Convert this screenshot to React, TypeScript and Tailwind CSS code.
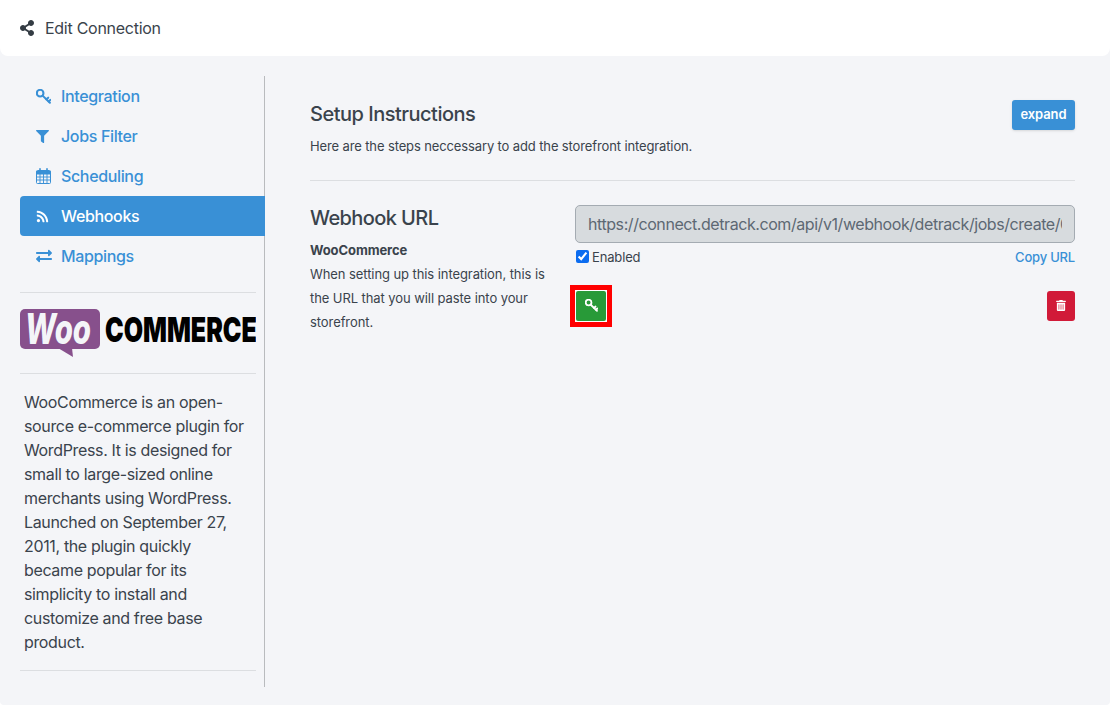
import { FaExchangeAlt, FaFilter, FaRss, FaShareAlt, FaTrashAlt } from 'react-icons/fa';

function KeyIcon({ className }: { className?: string }) {
  return (
    <svg viewBox="1 1 14.5 14.5" fill="none" stroke="currentColor" strokeWidth="2" strokeLinecap="round" className={className}>
      <circle cx="5" cy="5" r="3.2" />
      <path d="M7.4 7.4 14.4 14.2" />
      <path d="M11 11 12.8 9.4" />
      <path d="M13.2 13 14.8 11.6" />
    </svg>
  );
}

function CalendarIcon({ className }: { className?: string }) {
  return (
    <svg viewBox="0 0 15 16" className={className} fill="none" stroke="currentColor">
      <rect x="0.5" y="2.5" width="14" height="13" rx="1" />
      <path d="M0.5 3.5h14v2.5h-14z" fill="currentColor" />
      <path d="M0.5 9h14M0.5 12h14M4 6v9M7.5 6v9M11 6v9" strokeWidth="0.9" />
      <path d="M4 0.8v3M11 0.8v3" strokeWidth="1.6" strokeLinecap="round" />
    </svg>
  );
}

const navItems = [
  { label: 'Integration', icon: KeyIcon, size: 'h-[15px] w-[15px]' },
  { label: 'Jobs Filter', icon: FaFilter, size: 'h-[13px] w-[13px]' },
  { label: 'Scheduling', icon: CalendarIcon, size: 'h-[16px] w-[15px]' },
  { label: 'Webhooks', icon: FaRss, size: 'h-[13px] w-[13px]', active: true },
  { label: 'Mappings', icon: FaExchangeAlt, size: 'h-[16px] w-[16px]' },
];

function WooLogo() {
  return (
    <svg viewBox="0 -8 236 64" className="block h-[64px] w-[236px]">
      <rect width="80" height="40" rx="5" fill="#87508c" />
      <path d="M38 39 L53 48 L52 39 Z" fill="#87508c" />
      <text transform="translate(5 35) scale(0.7 1)" fontFamily="Inter" fontSize="42" fontWeight="800" fontStyle="italic" fill="#f4f5f8">Woo</text>
      <text transform="translate(85 33) scale(0.735 1)" fontFamily="Inter" fontSize="34" fontWeight="900" fill="#000000">COMMERCE</text>
    </svg>
  );
}

export default function App() {
  return (
    <div className="h-[706px] overflow-hidden bg-white font-['Inter',sans-serif] text-[#3a434c]">
      <div className="h-[705px] rounded-b-sm bg-[#f4f5f8]">
        <header className="flex h-[56px] items-center gap-[11px] rounded-b-lg bg-white pl-[20px]">
          <FaShareAlt className="h-[16px] w-[14px] text-[#343c44]" />
          <h1 className="text-[16px] font-normal tracking-[-0.27px]">Edit Connection</h1>
        </header>

        <div className="flex pt-[20px] pl-[20px]">
          <aside className="h-[611px] w-[245px] shrink-0 border-r border-[#b9bbbe]">
            <nav>
              {navItems.map(({ label, icon: Icon, size, active }) => (
                <a
                  key={label}
                  href="#"
                  className={`-mr-px flex h-[40px] items-center rounded-l pl-[16px] text-[16px] font-medium tracking-[-0.35px] ${active ? 'bg-[#3990d6] text-white' : 'text-[#3990d6]'}`}
                >
                  <span className="flex w-[25px] shrink-0 items-center">
                    <Icon className={size} />
                  </span>
                  {label}
                </a>
              ))}
            </nav>

            <div className="mt-[16px] w-[236px] border-t border-[#dcdee1] pt-[8px] pb-[8px]">
              <WooLogo />
            </div>
            <div className="w-[236px] border-y border-[#dcdee1] pt-[16px] pb-[16px] pl-[4px]">
              <p className="w-[224px] text-[16px] leading-[24px] tracking-[-0.35px]">
                WooCommerce is an open-source e-commerce plugin for WordPress. It is designed for small to large-sized online merchants using WordPress. Launched on September 27, 2011, the plugin quickly became popular for its simplicity to install and customize and free base product.
              </p>
            </div>
          </aside>

          <main className="ml-[45px] w-[765px] pt-[24px]">
            <div className="flex items-start justify-between">
              <div>
                <h2 className="text-[20px] leading-[28px] font-medium tracking-[-0.5px]">Setup Instructions</h2>
                <p className="mt-[8px] text-[13px] leading-[20px] tracking-[-0.125px]">Here are the steps neccessary to add the storefront integration.</p>
              </div>
              <button className="h-[30px] w-[63px] rounded-[3px] bg-[#3990d6] text-[13px] font-semibold tracking-[-0.1px] text-white shadow-sm">expand</button>
            </div>

            <hr className="mt-[24px] border-[#dcdee1]" />

            <div className="mt-[24px] flex">
              <div className="w-[265px] shrink-0">
                <h2 className="-mt-px text-[20px] leading-[28px] font-medium tracking-[-0.6px]">Webhook URL</h2>
                <p className="mt-[6px] text-[13px] leading-[24px] font-bold tracking-[-0.1px]">WooCommerce</p>
                <p className="w-[240px] text-[13px] leading-[24px] tracking-[-0.08px]">When setting up this integration, this is the URL that you will paste into your storefront.</p>
              </div>

              <div className="min-w-0 flex-1">
                <input
                  readOnly
                  value="https://connect.detrack.com/api/v1/webhook/detrack/jobs/create/0123456789"
                  className="block h-[38px] w-full rounded-[5px] border border-[#a4abb2] bg-[#d7dbde] px-[12px] text-[16px] tracking-[-0.43px] text-[#5d6873] outline-none"
                />
                <div className="mt-[3px] flex items-center justify-between">
                  <label className="flex items-center gap-[3px] text-[13px] leading-[16px] tracking-[-0.15px]">
                    <input type="checkbox" defaultChecked className="ml-[1px] h-[13px] w-[13px] accent-[#0b6cf0]" />
                    Enabled
                  </label>
                  <a href="#" className="mt-[2px] text-[13px] font-medium tracking-[-0.2px] text-[#3990d6]">Copy URL</a>
                </div>
                <div className="mt-[22px] flex items-center justify-between">
                  <div className="-m-[5px] border-[5px] border-[#ff0000] bg-white p-px">
                    <button className="flex h-[30px] w-[30px] items-center justify-center rounded-[2px] bg-[#289a38] text-white">
                      <KeyIcon className="h-[13px] w-[13px]" />
                    </button>
                  </div>
                  <button className="flex h-[30px] w-[28px] items-center justify-center rounded-[3px] bg-[#d11a38] text-white">
                    <FaTrashAlt className="h-[11px] w-[10px]" />
                  </button>
                </div>
              </div>
            </div>
          </main>
        </div>
      </div>
    </div>
  );
}
